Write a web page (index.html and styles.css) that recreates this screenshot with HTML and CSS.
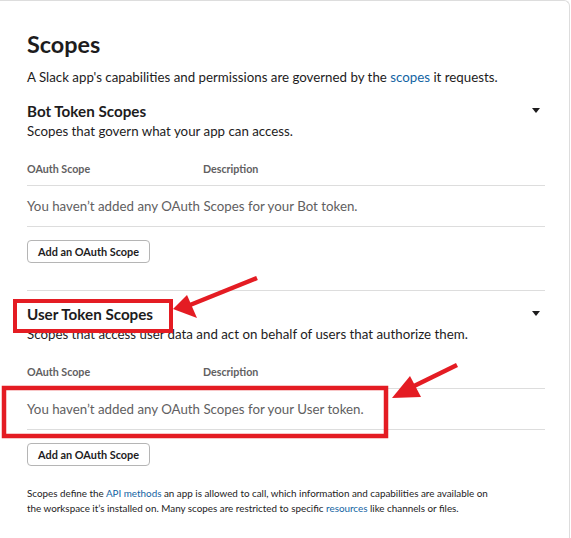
FILE: index.html
```html
<!DOCTYPE html>
<html>
<head>
<meta charset="utf-8">
<link rel="stylesheet" href="styles.css">
</head>
<body>
<div class="card">
  <h1 class="title">Scopes</h1>
  <p class="intro">A Slack app's capabilities and permissions are governed by the <a href="#">scopes</a> it requests.</p>

  <section class="scope-section">
    <div class="section-head">
      <div>
        <h2 class="section-title">Bot Token Scopes</h2>
        <p class="section-sub">Scopes that govern what your app can access.</p>
      </div>
      <span class="caret"></span>
    </div>
    <div class="table-head"><span class="col-scope">OAuth Scope</span><span>Description</span></div>
    <div class="empty-row">You haven’t added any OAuth Scopes for your Bot token.</div>
    <button class="btn">Add an OAuth Scope</button>
  </section>

  <section class="scope-section second">
    <div class="section-head">
      <div>
        <h2 class="section-title">User Token Scopes</h2>
        <p class="section-sub">Scopes that access user data and act on behalf of users that authorize them.</p>
      </div>
      <span class="caret"></span>
    </div>
    <div class="table-head"><span class="col-scope">OAuth Scope</span><span>Description</span></div>
    <div class="empty-row">You haven’t added any OAuth Scopes for your User token.</div>
    <button class="btn">Add an OAuth Scope</button>
  </section>

  <p class="footnote">Scopes define the <a href="#">API methods</a> an app is allowed to call, which information and capabilities are available on the workspace it’s installed on. Many scopes are restricted to specific <a href="#">resources</a> like channels or files.</p>
</div>

<svg class="annot" width="571" height="538" viewBox="0 0 571 538">
  <rect x="15" y="301" width="156" height="30" fill="none" stroke="#e41c23" stroke-width="4"/>
  <rect x="4" y="388" width="382" height="48" fill="none" stroke="#e41c23" stroke-width="4.5"/>
  <line x1="257" y1="278" x2="190" y2="305" stroke="#e41c23" stroke-width="4.5"/>
  <polygon points="173,309 187,295 197,318" fill="#e41c23"/>
  <line x1="457" y1="365" x2="410" y2="388" stroke="#e41c23" stroke-width="4.5"/>
  <polygon points="392,398 410,376 421,397" fill="#e41c23"/>
</svg>
</body>
</html>
```

FILE: styles.css
```css
html, body {
  margin: 0;
  padding: 0;
  background: #fff;
}
body {
  font-family: Lato, "Open Sans", sans-serif;
  color: #1d1c1d;
  width: 571px;
  height: 538px;
  overflow: hidden;
  position: relative;
}
a {
  color: #1264a3;
  text-decoration: none;
}
.card {
  width: 580px;
  margin-left: -10px;
  padding: 28px 24px 0 36px;
  border: 1px solid #dddddd;
  border-bottom: none;
  border-radius: 0 6px 0 0;
  height: 538px;
  box-sizing: border-box;
}
.title {
  margin: 0;
  font-size: 23.4px;
  font-weight: 700;
  line-height: 30px;
}
.intro {
  margin: 9px 0 0;
  font-size: 13.3px;
  line-height: 18px;
}
.scope-section {
  margin-top: 15px;
}
.scope-section.second {
  border-top: 1px solid #dddddd;
  margin-top: 27px;
  padding-top: 13px;
}
.section-head {
  display: flex;
  justify-content: space-between;
  align-items: flex-start;
}
.section-title {
  margin: 0;
  font-size: 15.2px;
  font-weight: 700;
  line-height: 20px;
}
.section-sub {
  margin: 1px 0 0;
  font-size: 13.3px;
  line-height: 18px;
}
.caret {
  width: 0;
  height: 0;
  border-left: 4px solid transparent;
  border-right: 4px solid transparent;
  border-top: 5px solid #1d1c1d;
  margin-top: 7px;
  margin-right: 5px;
}
.table-head {
  display: flex;
  margin-top: 21px;
  font-size: 10.7px;
  font-weight: 700;
  color: #616061;
  line-height: 16px;
  padding-bottom: 8px;
  border-bottom: 1px solid #dddddd;
}
.col-scope {
  width: 176px;
}
.empty-row {
  font-size: 13.3px;
  color: #616061;
  line-height: 18px;
  padding: 11px 0 11px;
  border-bottom: 1px solid #dddddd;
}
.btn {
  margin-top: 13px;
  font-family: inherit;
  font-size: 10.9px;
  font-weight: 700;
  color: #1d1c1d;
  background: #fff;
  border: 1px solid #b5b5b5;
  border-radius: 4px;
  height: 23px;
  padding: 0 10px;
  display: block;
}
.footnote {
  margin: 20px 0 0;
  max-width: 470px;
  font-size: 9.85px;
  line-height: 15px;
}
.annot {
  position: absolute;
  left: 0;
  top: 0;
  pointer-events: none;
}
```
